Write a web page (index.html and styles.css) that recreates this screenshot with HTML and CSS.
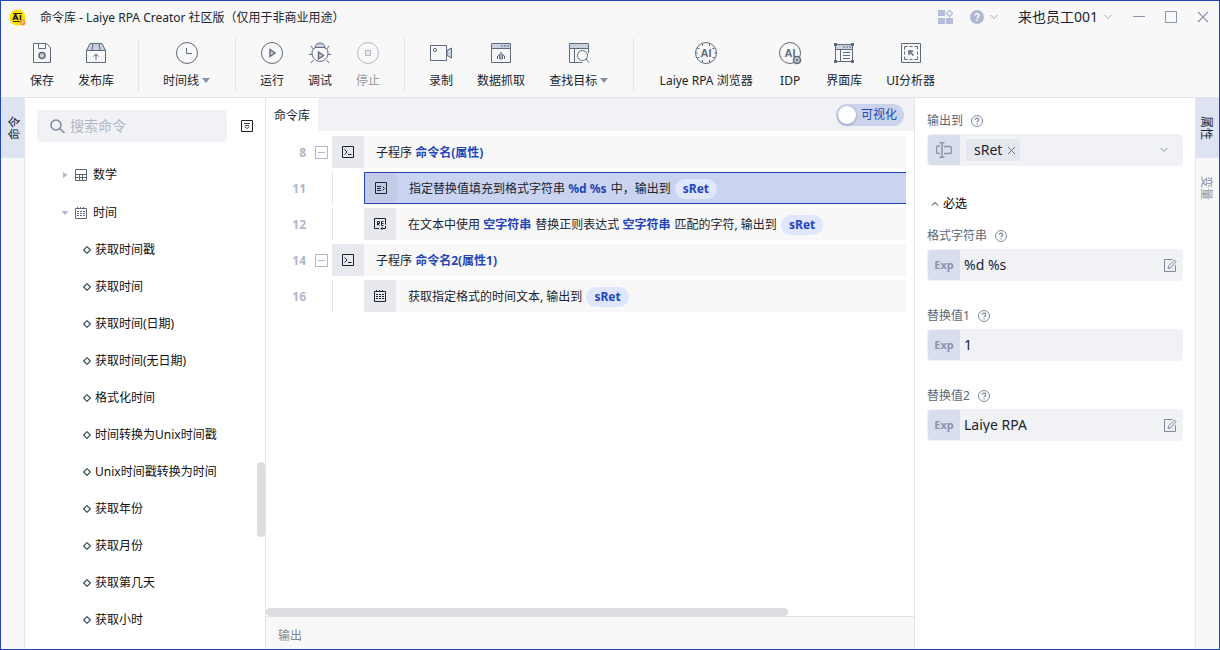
FILE: index.html
```html
<!DOCTYPE html>
<html lang="zh-CN">
<head>
<meta charset="utf-8">
<title>命令库 - Laiye RPA Creator</title>
<link rel="stylesheet" href="styles.css">
</head>
<body>
<svg class="defs" aria-hidden="true">
  <symbol id="chev" viewBox="0 0 8 6"><path d="M.5 1 4 4.500 7.500 1" fill="none" stroke="currentColor"/></symbol>
  <symbol id="dia" viewBox="0 0 8 8"><path d="M4 .7 7.300 4 4 7.300 .7 4Z" fill="none" stroke="currentColor" stroke-width="1.200"/></symbol>
  <symbol id="help" viewBox="0 0 12 12"><circle cx="6" cy="6" r="5.500" fill="none" stroke="currentColor"/><path d="M4.300 4.800a1.700 1.600 0 1 1 2.500 1.300q-.8.400-.8 1.200M6 8.200v1.200" fill="none" stroke="currentColor" stroke-width="1.200"/></symbol>
  <symbol id="edit" viewBox="0 0 13 13"><path d="M8.500.5h-8v12h11V6M4 9.500l.5-2.500L10.500 1l1.500 1.500L6.500 9Z" fill="none" stroke="currentColor"/></symbol>
  <symbol id="term" viewBox="0 0 12 12"><path d="M.5.5h11v11H.5ZM2.500 3.500 5 6 2.500 8.500M6 8.500h3.500" fill="none" stroke="currentColor"/></symbol>
  <symbol id="cal" viewBox="0 0 12 12"><path d="M.5 1.500h11v10H.5ZM2.500 0v1M5.500 0v1M8.500 0v1" fill="none" stroke="currentColor"/><path d="M2 4.500h8M2 6.500h8M2 8.500h8" fill="none" stroke="currentColor" stroke-dasharray="2 1"/></symbol>
</svg>
<div class="window">
  <header class="titlebar">
    <svg class="logo" viewBox="0 0 17 17"><circle cx="8.500" cy="8.500" r="8" fill="#ffe100"/><path d="M4 4.500h9M4 12.500h7" stroke="#222"/><path d="m4 11 2.500-5.500L9 11M5 9.500h3.500M11.500 6v5" fill="none" stroke="#222" stroke-width="1.600"/><circle cx="13.500" cy="13.500" r="3" fill="#f29a2e"/><path d="m12.500 14.500 2-2" stroke="#fff"/></svg>
    <h1 class="title">命令库 - Laiye RPA Creator 社区版（仅用于非商业用途）</h1>
    <button class="tb-btn apps" aria-label="应用"><svg width="15" height="14" viewBox="0 0 15 14"><path d="M0 0h7v6H0zM0 8h7v6H0zM8 8h7v6H8z" fill="#b5bcd6"/><path d="m11.500.5 3 3-3 3-3-3Z" fill="none" stroke="#b5bcd6" stroke-width="1.300"/></svg></button>
    <button class="tb-btn helper" aria-label="帮助"><svg width="14" height="14" viewBox="0 0 14 14"><circle cx="7" cy="7" r="7" fill="#b0b8d2"/><path d="M5 5.600a2 1.900 0 1 1 3 1.600q-1 .5-1 1.300M7 9.500V11" fill="none" stroke="#fff" stroke-width="1.500"/></svg><svg width="8" height="6"><use href="#chev"/></svg></button>
    <button class="tb-btn user">来也员工001<svg width="8" height="6"><use href="#chev"/></svg></button>
    <button class="tb-btn win" aria-label="最小化"><svg width="12" height="12"><path d="M0 5.500h12" stroke="#8b95b0"/></svg></button>
    <button class="tb-btn win" aria-label="最大化"><svg width="12" height="12"><path d="M.5.5h11v11H.5Z" fill="none" stroke="#8b95b0"/></svg></button>
    <button class="tb-btn win" aria-label="关闭"><svg width="12" height="12"><path d="m1 1 10 10M11 1 1 11" stroke="#8b95b0" stroke-width="1.200"/></svg></button>
  </header>
  <nav class="toolbar">
    <button class="tool"><svg viewBox="0 0 24 24"><path d="M3.500 2.500h13l4 4v15h-17Z"/><path d="M8.500 2.500v5h7v-5"/><circle cx="12" cy="14.500" r="3" fill="#c9d0de" stroke-width="1.500"/></svg><span>保存</span></button>
    <button class="tool"><svg viewBox="0 0 24 24"><path d="m2.500 9.500 3.500-7h12l3.500 7Z" fill="#c9d0de"/><path d="M2.500 9.500v12h19v-12M9 2.500l-1 7M15 2.500l1 7M12 19v-6M9.500 15.500 12 13l2.500 2.500"/></svg><span>发布库</span></button>
    <i class="sep"></i>
    <button class="tool"><svg viewBox="0 0 24 24"><circle cx="12" cy="12" r="10.500"/><path d="M11.500 7v5.500H17"/></svg><span class="drop">时间线</span></button>
    <i class="sep"></i>
    <button class="tool"><svg viewBox="0 0 24 24"><circle cx="12" cy="12" r="10.500"/><path d="M10 8.500v7l5-3.500Z" fill="#c9d0de" stroke-width="1.400"/></svg><span>运行</span></button>
    <button class="tool"><svg viewBox="0 0 24 24"><path d="M7 6.500a5 4.500 0 0 1 10 0Z" fill="#c9d0de"/><path d="M7.500 6.500 4.500 9a8 8.500 0 1 0 15 0l-3-2.500M1 13.500h3M20 13.500h3M3 5l2.500 3.500M21 5l-2.500 3.500M3 22l2.500-3M21 22l-2.500-3"/><path d="M10.500 11v7l5-3.500Z" fill="#c9d0de" stroke-width="1.400"/></svg><span>调试</span></button>
    <button class="tool" disabled><svg viewBox="0 0 24 24"><circle cx="12" cy="12" r="10.500"/><path d="M9.500 9.500h5v5h-5Z" fill="#c9d0de"/></svg><span>停止</span></button>
    <i class="sep"></i>
    <button class="tool"><svg viewBox="0 0 24 24"><path d="M1.500 4.500h16v15h-16Z"/><path d="M18 9.500 22.500 7v10L18 14.500Z" fill="#c9d0de"/><circle cx="6" cy="9" r="1.600"/></svg><span>录制</span></button>
    <button class="tool"><svg viewBox="0 0 24 24"><path d="M2.500 2.500h19v5h-19Z" fill="#c9d0de"/><path d="M2.500 7.500v14h19v-14M12 11v8M11.500 12.500l-3 2.500v3M12.500 12.500l3 2.500v3M10.500 14v4M13.500 14v4"/><path d="M12 5h8" stroke-dasharray="2 1"/></svg><span>数据抓取</span></button>
    <button class="tool"><svg viewBox="0 0 24 24"><path d="M2.500 2.500h19v5h-19Z" fill="#c9d0de"/><path d="M21.500 12V7.500h-19v14h13M7.500 7.500v14"/><circle cx="15.500" cy="14.500" r="5"/><path d="m19 18 3 3.500"/></svg><span class="drop">查找目标</span></button>
    <i class="sep"></i>
    <button class="tool wide"><svg viewBox="0 0 24 24"><circle cx="12" cy="12" r="10.500"/><path d="M8.500 3v2M15.500 3v2M8.500 19v2M15.500 19v2M1.500 12h2M20.500 12h2M3.500 7.500h2M18.500 7.500h2M3.500 16.500h2M18.500 16.500h2"/><text x="12" y="16">AI</text></svg><span>Laiye RPA 浏览器</span></button>
    <button class="tool"><svg viewBox="0 0 24 24"><circle cx="12" cy="12" r="10.500"/><text x="12" y="16">AI</text><circle cx="19" cy="19" r="3.500" fill="#c9d0de" stroke-width="1.500"/><circle cx="19" cy="19" r="1"/></svg><span>IDP</span></button>
    <button class="tool"><svg viewBox="0 0 24 24"><path d="M3.500 3.500h17v5h-17Z" fill="#c9d0de"/><path d="M3.500 8.500v12h17v-12M8.500 8.500v12M11 11.500h7M11 14.500h7M11 17.500h7"/><path d="M11 6h8" stroke-dasharray="2 1"/><path d="M2 2h3v3H2zM19 2h3v3h-3zM2 19h3v3H2zM19 19h3v3h-3z" fill="#5f6b7c" stroke="none"/></svg><span>界面库</span></button>
    <button class="tool"><svg viewBox="0 0 24 24"><path d="M2.500 2.500h19v19h-19Z"/><path d="M5.500 8.500v-3h3M5.500 15.500v3h3M18.500 8.500v-3h-3M18.500 15.500v3h-3M10.500 5.500h3M10.500 18.500h3M5.500 10.500v3M18.500 10.500v3"/><path d="M10 14v-4h4M10 10l4.500 4.500" stroke-width="1.500"/></svg><span>UI分析器</span></button>
  </nav>
  <div class="body">
    <aside class="rail left"><button class="rail-tab on"><span>命令</span></button></aside>
    <section class="commands">
      <div class="search-row">
        <label class="search"><svg width="15" height="15" viewBox="0 0 15 15"><circle cx="6" cy="6" r="5" fill="none" stroke="#7e8797" stroke-width="1.500"/><path d="m9.500 9.500 5 4.500" stroke="#7e8797" stroke-width="1.500"/></svg><input type="text" placeholder="搜索命令" aria-label="搜索命令"></label>
        <button class="collapse" aria-label="全部收起"><svg width="12" height="12" viewBox="0 0 12 12"><path d="M.5.5h11v11H.5Z" fill="none" stroke="#222"/><path d="M3 3.500h6M4 5.500h4M3.500 6.500 6 8.500 8.500 6.500" fill="none" stroke="#444"/></svg></button>
      </div>
      <ul class="tree">
        <li class="group"><svg class="arrow" viewBox="0 0 8 8"><path d="M2 1v6l4.500-3Z"/></svg><svg class="gicon" viewBox="0 0 12 12"><path d="M.5.5h11v11H.5ZM.5 5.500h11M.5 8.500h11M4.500 5.500v6M7.500 5.500v6" fill="none" stroke="currentColor"/></svg>数学</li>
        <li class="group"><svg class="arrow" viewBox="0 0 8 8"><path d="M.5 2h7L4 6Z"/></svg><svg class="gicon"><use href="#cal"/></svg>时间</li>
        <li class="cmd"><svg><use href="#dia"/></svg>获取时间戳</li>
        <li class="cmd"><svg><use href="#dia"/></svg>获取时间</li>
        <li class="cmd"><svg><use href="#dia"/></svg>获取时间(日期)</li>
        <li class="cmd"><svg><use href="#dia"/></svg>获取时间(无日期)</li>
        <li class="cmd"><svg><use href="#dia"/></svg>格式化时间</li>
        <li class="cmd"><svg><use href="#dia"/></svg>时间转换为Unix时间戳</li>
        <li class="cmd"><svg><use href="#dia"/></svg>Unix时间戳转换为时间</li>
        <li class="cmd"><svg><use href="#dia"/></svg>获取年份</li>
        <li class="cmd"><svg><use href="#dia"/></svg>获取月份</li>
        <li class="cmd"><svg><use href="#dia"/></svg>获取第几天</li>
        <li class="cmd"><svg><use href="#dia"/></svg>获取小时</li>
      </ul>
      <div class="vthumb"></div>
    </section>
    <main class="editor">
      <div class="tabs">
        <button class="tab">命令库</button>
        <label class="toggle"><input type="checkbox" checked><span>可视化</span></label>
      </div>
      <ol class="flow">
        <li class="line"><b class="no">8</b><button class="fold" aria-label="折叠"></button><div class="step"><span class="cell"><svg><use href="#term"/></svg></span><p>子程序 <b>命令名(属性)</b></p></div></li>
        <li class="line nested"><b class="no">11</b><div class="step selected"><span class="cell"><svg viewBox="0 0 12 12"><path d="M.5.5h11v11H.5ZM2 4.500h4M2 6.500h4M2 8.500h4M7.500 4.500l2 2-2 2" fill="none" stroke="currentColor"/></svg></span><p>指定替换值填充到格式字符串 <b>%d %s</b> 中，输出到 <b class="pill">sRet</b></p></div></li>
        <li class="line nested"><b class="no">12</b><div class="step"><span class="cell"><svg viewBox="0 0 12 12"><path d="M5 10.500H.5V.5h11v6M11.500 8v2.500H7M8.500 9 7 10.500 8.500 12M3.500 7.500v-4h2v2h-2l2 2M9.500 3.500h-2v4h2M7.500 5.500h2" fill="none" stroke="currentColor"/></svg></span><p>在文本中使用 <b>空字符串</b> 替换正则表达式 <b>空字符串</b> 匹配的字符, 输出到 <b class="pill">sRet</b></p></div></li>
        <li class="line"><b class="no">14</b><button class="fold" aria-label="折叠"></button><div class="step"><span class="cell"><svg><use href="#term"/></svg></span><p>子程序 <b>命令名2(属性1)</b></p></div></li>
        <li class="line nested"><b class="no">16</b><div class="step"><span class="cell"><svg><use href="#cal"/></svg></span><p>获取指定格式的时间文本, 输出到 <b class="pill">sRet</b></p></div></li>
      </ol>
      <div class="hscroll"><div class="hthumb"></div></div>
      <footer class="output">输出</footer>
    </main>
    <section class="props">
      <div class="field">
        <div class="flabel"><span>输出到</span><svg><use href="#help"/></svg></div>
        <div class="box">
          <span class="mode"><svg width="16" height="16" viewBox="0 0 16 16"><path d="M4 4H2.500Q.5 4 .5 6v3.500q0 2 2 2H4M8 4.500h5.500q2 0 2 2v3q0 2-2 2H8M6 1.500v13M3.500.5Q6 .5 6 2 6 .5 8.500.5M3.500 15.500q2.500 0 2.500-1.500 0 1.500 2.500 1.500" fill="none" stroke="#8b95ae" stroke-width="1.500"/></svg></span>
          <span class="tag">sRet<button class="x" aria-label="移除"><svg width="9" height="9"><path d="m1 1 7 7M8 1 1 8" stroke="#666f80"/></svg></button></span>
          <button class="more" aria-label="展开"><svg width="8" height="6"><use href="#chev"/></svg></button>
        </div>
      </div>
      <button class="section"><svg width="8" height="6" viewBox="0 0 8 6"><path d="M1 4.500 4 1.500l3 3" fill="none" stroke="#222"/></svg>必选</button>
      <div class="field">
        <div class="flabel"><label for="f1">格式字符串</label><svg><use href="#help"/></svg></div>
        <div class="box"><span class="mode">Exp</span><input id="f1" type="text" value="%d %s"><button class="edit" aria-label="编辑"><svg><use href="#edit"/></svg></button></div>
      </div>
      <div class="field">
        <div class="flabel"><label for="f2">替换值1</label><svg><use href="#help"/></svg></div>
        <div class="box"><span class="mode">Exp</span><input id="f2" type="text" value="1"></div>
      </div>
      <div class="field">
        <div class="flabel"><label for="f3">替换值2</label><svg><use href="#help"/></svg></div>
        <div class="box"><span class="mode">Exp</span><input id="f3" type="text" value="Laiye RPA"><button class="edit" aria-label="编辑"><svg><use href="#edit"/></svg></button></div>
      </div>
    </section>
    <aside class="rail right"><button class="rail-tab on"><span>属性</span></button><button class="rail-tab"><span>变量</span></button></aside>
  </div>
</div>
</body>
</html>
```

FILE: styles.css
```css
* { box-sizing: border-box; }
body { margin: 0; font: 12px/16px "Noto Sans", "Noto Sans CJK SC", sans-serif; color: #20242e; }
button, input { font: inherit; color: inherit; background: none; border: 0; padding: 0; margin: 0; }
input:focus { outline: none; }
ul, ol { list-style: none; margin: 0; padding: 0; }
p, h1 { margin: 0; font-weight: normal; }
svg { flex: none; display: block; }
.defs { position: absolute; width: 0; height: 0; }
.window { display: flex; flex-direction: column; height: 100vh; border: 1px solid #2446b8; background: #f8f8f8; overflow: hidden; }

.titlebar { display: flex; align-items: center; height: 32px; padding: 0 10px 0 8px; }
.logo { width: 17px; height: 17px; margin-right: 14px; }
.title { font-size: 12px; flex: 1; padding-top: 2px; }
.tb-btn { display: flex; align-items: center; gap: 6px; color: #a3acc4; }
.helper { margin: 0 20px 0 17px; }
.user { font-size: 14px; color: #20242e; margin-right: 1px; }
.user svg { color: #a3acc4; }
.win { margin-left: 20px; }

.toolbar { display: flex; align-items: center; gap: 24px; height: 65px; padding: 0 29px 1px; border-bottom: 1px solid #e3e4ea; }
.tool { display: flex; flex-direction: column; align-items: center; gap: 8px; white-space: nowrap; }
.tool svg { width: 24px; height: 24px; fill: none; stroke: #5f6b7c; }
.tool text { font: bold 11px "Liberation Sans", sans-serif; text-anchor: middle; fill: #5f6b7c; stroke: none; }
.tool:disabled { opacity: .45; }
.wide { min-width: 96px; }
.drop { display: flex; align-items: center; gap: 3px; padding-right: 1px; }
.drop::after { content: ""; border: 4px solid transparent; border-top: 5px solid #8790a4; border-bottom: 0; }
.sep { width: 1px; height: 54px; background: #e3e4ea; }

.body { display: flex; flex: 1; min-height: 0; }
.rail { display: flex; flex-direction: column; flex: none; width: 24px; }
.left { border-right: 1px solid #e3e4ea; }
.right { border-left: 1px solid #e3e4ea; }
.rail-tab { display: flex; align-items: center; justify-content: center; height: 60px; color: #8a92a6; }
.rail-tab span { writing-mode: vertical-rl; text-orientation: sideways; }
.rail-tab.on { background: #dee3f2; color: #20242e; }
.left span { transform: rotate(180deg); }
.left .rail-tab { padding-left: 4px; }
.right .rail-tab { padding-right: 4px; }

.commands { position: relative; flex: none; width: 241px; padding: 12px; background: #fff; border-right: 1px solid #e3e4ea; overflow: hidden; }
.search-row { display: flex; align-items: center; gap: 14px; margin-bottom: 14px; }
.search { display: flex; align-items: center; gap: 5px; width: 190px; height: 32px; padding: 0 13px; border-radius: 4px; background: #f1f2f6; }
.search input { flex: 1; min-width: 0; font-size: 14px; }
.search input::placeholder { color: #b0b6c6; opacity: 1; }
.group, .cmd { display: flex; align-items: center; height: 37px; color: #111; white-space: nowrap; }
.group { padding-left: 24px; }
.group:first-child { margin-bottom: 1px; }
.arrow { width: 8px; height: 8px; margin-right: 6px; fill: #b0b6cc; }
.gicon { width: 12px; height: 12px; margin-right: 6px; color: #5f6776; }
.cmd { padding-left: 46px; gap: 4px; }
.cmd svg { width: 8px; height: 8px; color: #3d5560; }
.vthumb { position: absolute; right: 0; top: 364px; width: 8px; height: 75px; border-radius: 4px; background: #dcdde0; }

.editor { display: flex; flex-direction: column; flex: 1; min-width: 0; background: #fff; }
.tabs { display: flex; align-items: center; justify-content: space-between; height: 33px; padding-right: 10px; background: #f1f2f6; }
.tab { align-self: stretch; padding: 2px 8px 0; background: #fff; }
.toggle { display: flex; align-items: center; gap: 5px; height: 22px; padding: 0 7px 0 2px; border-radius: 11px; background: #cbd3eb; color: #2446b8; }
.toggle input { appearance: none; width: 18px; height: 18px; border-radius: 50%; background: #fff; box-shadow: 0 1px 3px #8a96bb; }
.flow { flex: 1; display: flex; flex-direction: column; gap: 4px; padding: 5px 8px 0 0; }
.line { display: flex; align-items: center; height: 32px; }
.no { width: 40px; padding-top: 2px; text-align: right; color: #b0b6cc; }
.fold { width: 13px; height: 13px; margin: 0 4px 0 9px; border: 1px solid #b0b6cc; display: flex; align-items: center; justify-content: center; }
.fold::before { content: ""; width: 7px; height: 1px; background: #b0b6cc; }
.step { display: flex; align-items: center; flex: 1; height: 32px; min-width: 0; background: #f8f8f8; white-space: nowrap; }
.step p { padding-top: 2px; }
.nested::before { content: ""; order: 1; width: 1px; height: 32px; margin: 0 31px 0 26px; background: #e3e4ea; }
.nested .step { order: 2; }
.cell { display: flex; align-items: center; justify-content: center; align-self: stretch; width: 32px; margin-right: 12px; background: #e8e9ef; }
.cell svg { width: 12px; height: 12px; }
.step b { margin-right: 1px; color: #2446b8; }
.step .pill { display: inline-block; margin-left: 1px; padding: 2px 8px; border-radius: 10px; background: #dfe6fd; }
.selected { background: #cad3ef; border: 1px solid #2446b8; border-right: 0; }
.selected .cell { background: #c3cbe6; }
.hscroll { height: 8px; }
.hthumb { width: 522px; max-width: 100%; height: 8px; border-radius: 4px; background: #dcdde0; }
.output { height: 33px; padding: 11px 12px 0; border-top: 1px solid #e3e4ea; background: #f8f8f8; color: #7e8797; }

.props { flex: none; width: 281px; padding: 15px 12px; background: #fff; border-left: 1px solid #e3e4ea; }
.field { margin-bottom: 27px; }
.flabel { display: flex; align-items: center; gap: 8px; height: 16px; margin-bottom: 5px; color: #606776; }
.flabel svg { width: 12px; height: 12px; color: #7e88a0; }
.box { display: flex; align-items: center; height: 32px; padding: 1px; border-radius: 4px; background: #f1f2f6; overflow: hidden; }
.mode { display: flex; align-items: center; justify-content: center; flex: none; width: 32px; height: 30px; border-radius: 3px 0 0 3px; background: #d9deed; color: #8b95ae; font-size: 11px; font-weight: bold; }
.box input { flex: 1; min-width: 0; padding: 0 4px; font-size: 14px; }
.edit svg { width: 13px; height: 13px; margin-right: 5px; color: #7e8797; }
.tag { display: flex; align-items: center; gap: 5px; height: 22px; margin-left: 6px; padding: 0 4px 0 8px; border-radius: 2px; background: #e5e8ef; font-size: 14px; }
.more { margin: 0 14px 0 auto; color: #8b95ae; }
.section { display: flex; align-items: center; gap: 4px; height: 16px; margin: 30px 0 16px 4px; color: #000; }
```
